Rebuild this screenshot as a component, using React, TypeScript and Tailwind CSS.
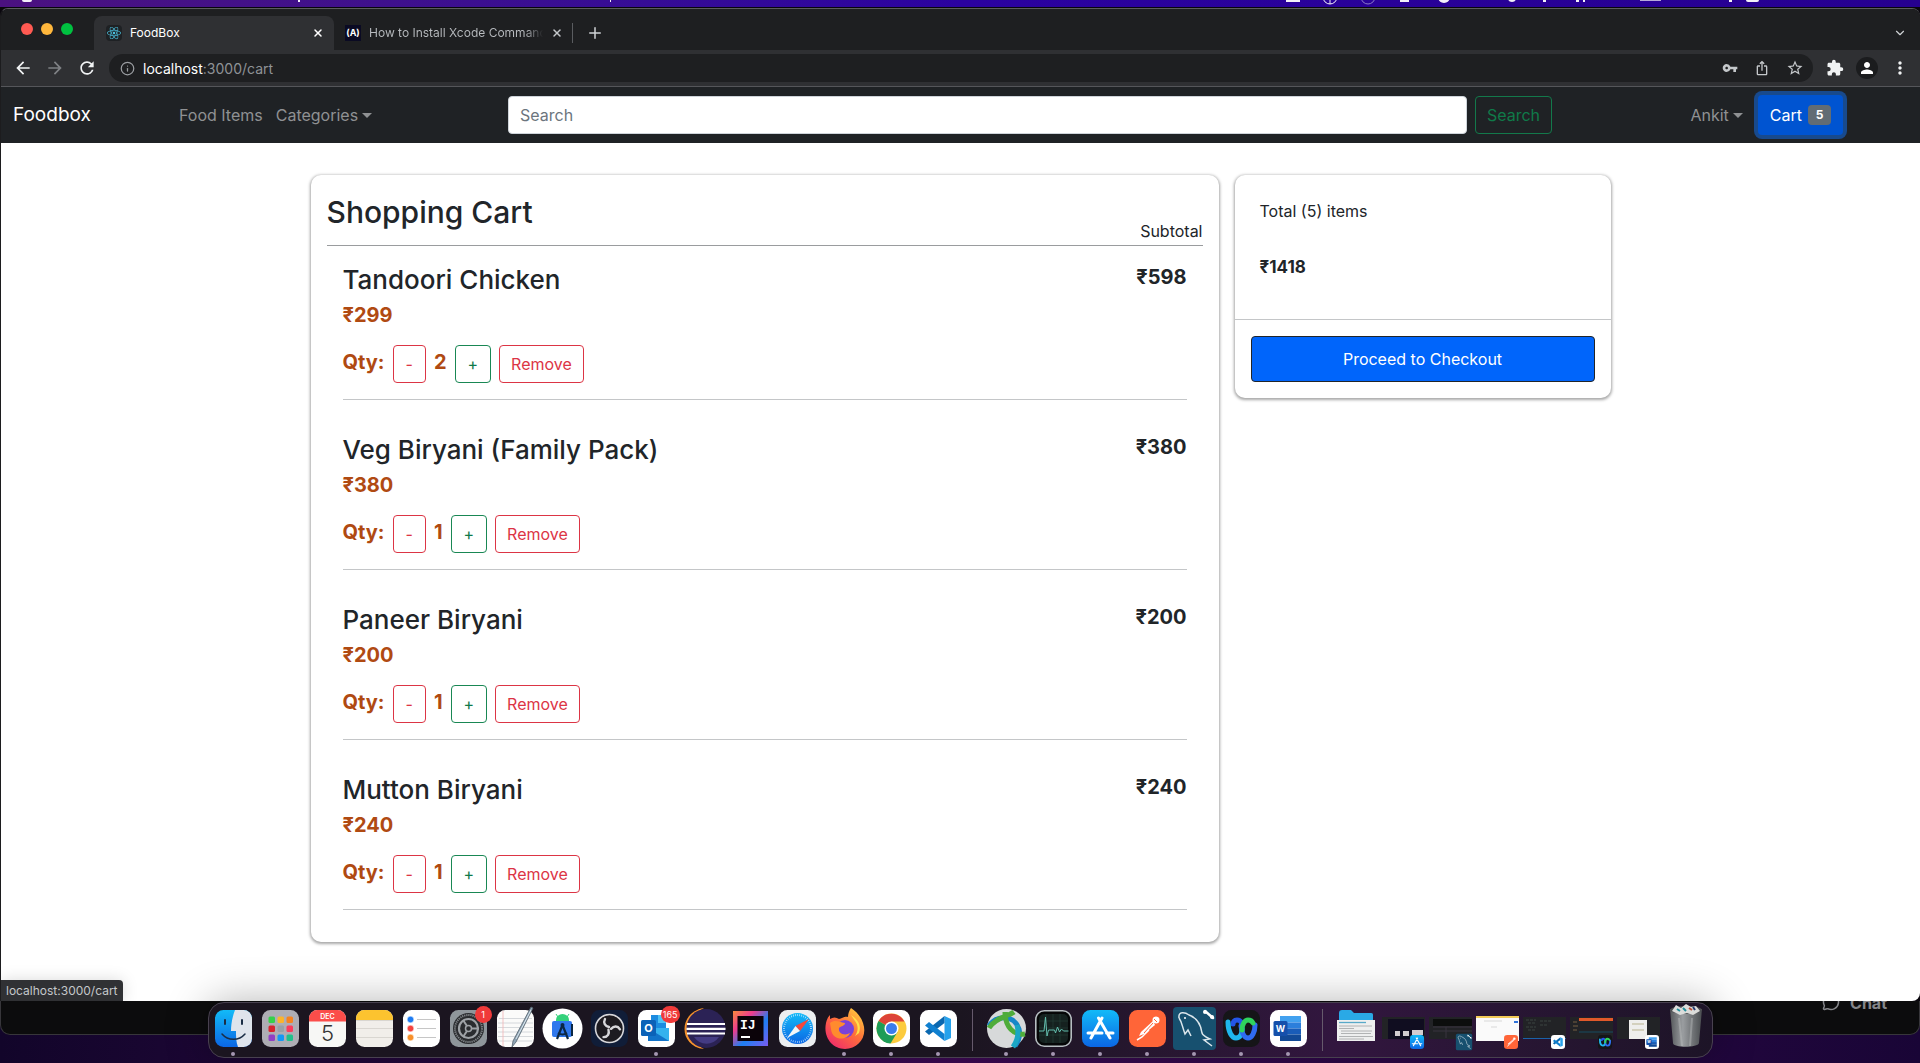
import React from "react";
import type { ReactNode } from "react";
import { FaReact } from "react-icons/fa";
import { MdVpnKey, MdExtension, MdPerson, MdMoreVert, MdStarBorder, MdIosShare, MdArrowBack, MdArrowForward, MdRefresh } from "react-icons/md";
import { ChevronDown, Info, Plus, X, MessageCircle } from "lucide-react";

type Item = { name: string; price: number; qty: number };

const items: Item[] = [
  { name: "Tandoori Chicken", price: 299, qty: 2 },
  { name: "Veg Biryani (Family Pack)", price: 380, qty: 1 },
  { name: "Paneer Biryani", price: 200, qty: 1 },
  { name: "Mutton Biryani", price: 240, qty: 1 },
];

const count = items.reduce((n, i) => n + i.qty, 0);
const total = items.reduce((n, i) => n + i.qty * i.price, 0);

function MenuBar() {
  return (
    <div className="h-[7px] shrink-0 overflow-hidden bg-gradient-to-r from-[#4b1180] via-[#2b02a0] to-[#260090]">
      <svg className="h-[7px] w-full" fill="#f3f0fa" aria-hidden="true">
        <rect x="22" y="-4" width="10" height="6" rx="2" />
        <rect x="298" y="0" width="2" height="2" />
        <rect x="610" y="0" width="1" height="2" />
        <rect x="1286" y="-3" width="14" height="5" />
        <circle cx="1330" cy="-3" r="7" fill="none" stroke="#f3f0fa" />
        <path d="M1330 -3v7" stroke="#f3f0fa" />
        <circle cx="1368" cy="-3" r="7" fill="none" stroke="#8a78c8" />
        <rect x="1400" y="-2" width="9" height="4" />
        <circle cx="1444" cy="-3" r="6" />
        <circle cx="1512" cy="-2" r="4" />
        <rect x="1543" y="0" width="3" height="2" />
        <rect x="1576" y="0" width="3" height="2" />
        <rect x="1583" y="0" width="2" height="2" />
        <rect x="1640" y="0" width="21" height="1" opacity=".7" />
        <rect x="1729" y="0" width="3" height="2" />
        <rect x="1746" y="-4" width="13" height="6" rx="2" />
      </svg>
    </div>
  );
}

function TabStrip() {
  return (
    <div className="flex h-[41px] shrink-0 items-end bg-[#1e1f21] pr-3">
      <div className="mb-[15px] ml-5 flex w-[73px] gap-2">
        <span className="size-3 rounded-full bg-[#ff5a52]" />
        <span className="size-3 rounded-full bg-[#ffb73c]" />
        <span className="size-3 rounded-full bg-[#00c140]" />
      </div>
      <div className="flex h-[34px] w-[240px] items-center rounded-t-lg bg-[#2f3033] pr-[10px] pl-3">
        <span className="grid size-4 place-items-center rounded-sm bg-[#1e2124]">
          <FaReact className="size-[14px] text-[#4bbfdc]" />
        </span>
        <span className="ml-2 flex-1 text-xs text-white">FoodBox</span>
        <button aria-label="Close FoodBox tab" className="text-white"><X size={12} strokeWidth={3} /></button>
      </div>
      <div className="flex h-[34px] w-[238px] items-center pr-[9px] pl-[11px]">
        <span className="grid h-4 w-4 shrink-0 place-items-center overflow-hidden bg-[#0a0a23] text-[9px] font-bold text-white">(A)</span>
        <span className="ml-2 flex-1 overflow-hidden bg-gradient-to-r from-[#b9bcc0] from-90% to-transparent bg-clip-text text-xs whitespace-nowrap text-transparent">How to Install Xcode Command</span>
        <button aria-label="Close Xcode tab" className="ml-2 text-[#c4c7ca]"><X size={12} strokeWidth={3} /></button>
      </div>
      <span className="mb-[7px] h-5 w-px bg-[#5a5c60]" />
      <button aria-label="New tab" className="mb-2 ml-[13px] text-[#d0d3d6]"><Plus size={18} /></button>
      <button aria-label="Search tabs" className="mb-[10px] ml-auto pr-px text-[#d0d3d6]"><ChevronDown size={14} /></button>
    </div>
  );
}

function Toolbar() {
  return (
    <div className="flex h-[37px] shrink-0 items-center border-b border-[#55565a] bg-[#2f3033] pr-[10px] pl-3 text-[#f1f3f4]">
      <button aria-label="Back" className="mr-3"><MdArrowBack size={20} /></button>
      <button aria-label="Forward" className="mr-3 text-[#7e8084]"><MdArrowForward size={20} /></button>
      <button aria-label="Reload" className="mr-3"><MdRefresh size={20} /></button>
      <div className="flex h-7 flex-1 items-center rounded-full bg-[#1e1f21] pr-[9px] pl-[11px] text-[#c4c7ca]">
        <Info size={15} className="text-[#9a9da1]" />
        <div className="ml-2 flex-1 text-[14px] text-[#8f9296]"><span className="text-white">localhost</span>:3000/cart</div>
        <button aria-label="Passwords"><MdVpnKey size={16} /></button>
        <button aria-label="Share" className="ml-4"><MdIosShare size={16} /></button>
        <button aria-label="Bookmark" className="ml-4"><MdStarBorder size={18} /></button>
      </div>
      <button aria-label="Extensions" className="ml-[13px]"><MdExtension size={18} /></button>
      <button aria-label="Profile" className="ml-3 grid size-[22px] place-items-center rounded-full bg-[#1b1c1e] text-white"><MdPerson size={18} /></button>
      <button aria-label="Browser menu" className="ml-3"><MdMoreVert size={20} /></button>
    </div>
  );
}

function Caret() {
  return <span className="ml-1 inline-block border-x-[5px] border-t-[5px] border-x-transparent border-t-current align-[3px]" />;
}

function NavBar() {
  return (
    <nav className="grid h-14 shrink-0 grid-cols-[507px_1fr_368px] items-center bg-[#1f2225] text-[16px] text-[#8f9193]">
      <div className="flex items-center">
        <a href="#home" className="ml-3 w-[166px] text-[19px] text-white">Foodbox</a>
        <a href="#food" className="mr-[13px]">Food Items</a>
        <button>Categories<Caret /></button>
      </div>
      <form className="flex gap-2">
        <input aria-label="Search" placeholder="Search" className="h-[38px] min-w-0 flex-1 rounded border border-[#ced4da] bg-white px-[11px] text-[#212529] placeholder:text-[#6c757d]" />
        <button type="button" className="h-[38px] rounded border border-[#13794b] px-[11px] text-[#0f7a49]">Search</button>
      </form>
      <div className="flex items-center justify-end pr-[77px]">
        <button className="mr-[15px]">Ankit<Caret /></button>
        <button className="flex h-10 items-center rounded bg-[#0054d1] px-3 text-white ring-4 ring-[#184a8d]">
          Cart<span className="ml-[6px] grid h-5 w-[23px] place-items-center rounded bg-[#626c74] text-xs font-bold">5</span>
        </button>
      </div>
    </nav>
  );
}

function CartRow({ item }: { item: Item }) {
  return (
    <li className="mb-8 flex items-start justify-between border-b border-[#c4c6c8] pb-4">
      <div>
        <h2 className="text-[26px] leading-9 font-medium">{item.name}</h2>
        <p className="mb-[13px] text-[20px] leading-[34px] font-bold text-[#b04a12]">₹{item.price}</p>
        <div className="flex gap-2 text-[20px] leading-[34px] font-bold text-[#b04a12]">
          <span>Qty:</span>
          <button aria-label={"Decrease " + item.name} className="h-[38px] rounded border border-[#dc3545] px-3 text-[16px] leading-9 font-normal text-[#dc3545]">-</button>
          <span>{item.qty}</span>
          <button aria-label={"Increase " + item.name} className="h-[38px] rounded border border-[#198754] px-3 text-[16px] leading-9 font-normal text-[#0f7a49]">+</button>
          <button className="h-[38px] rounded border border-[#dc3545] px-[11px] text-[16px] leading-9 font-normal text-[#dc3545]">Remove</button>
        </div>
      </div>
      <span className="text-[20px] leading-[30px] font-bold">₹{item.qty * item.price}</span>
    </li>
  );
}

function CartPage() {
  return (
    <main className="relative flex-1 rounded-br-lg bg-white text-[#212529]">
      <div className="mx-auto grid max-w-[1300px] grid-cols-[908fr_376fr] items-start gap-4 pt-8">
        <section className="rounded-[10px] px-4 shadow-[0_1px_3px_1px_rgba(0,0,0,0.35)]">
          <header className="flex h-[71px] items-end justify-between border-b border-[#9a9c9e]">
            <h1 className="pb-[13px] text-[30px] leading-10 font-medium">Shopping Cart</h1>
            <span className="pb-[2px] text-[16px] leading-6">Subtotal</span>
          </header>
          <ul className="px-4 pt-4">
            {items.map((i) => <CartRow key={i.name} item={i} />)}
          </ul>
        </section>
        <aside className="rounded-[10px] shadow-[0_1px_3px_1px_rgba(0,0,0,0.35)]">
          <div className="h-[145px] border-b border-[#c4c6c8] px-[25px] pt-6 text-[16px] leading-6">
            <p className="mb-8">Total ({count}) items</p>
            <p className="text-[17px] font-bold">₹{total}</p>
          </div>
          <div className="p-4">
            <button className="h-[46px] w-full rounded border border-[#212529] bg-[#0065fb] text-[16px] text-white">Proceed to Checkout</button>
          </div>
        </aside>
      </div>
      <div className="absolute bottom-0 left-0 h-[21px] rounded-tr bg-[#303134] px-[5px] text-xs leading-[21px] text-[#c4c7ca] shadow-[0_0_16px_rgba(0,0,0,0.15)]">localhost:3000/cart</div>
    </main>
  );
}

/* Dock artwork, drawn on a 37 unit square */

function Tile({ fill = "#fff" }: { fill?: string }) {
  return <rect width="37" height="37" rx="8.5" fill={fill} />;
}

const finder = (
  <>
    <clipPath id="fc"><rect width="37" height="37" rx="8.5" /></clipPath>
    <g clipPath="url(#fc)">
      <rect width="37" height="37" fill="url(#blue)" />
      <path d="M20 0C17 8 16 15 16 21h5c0 6 0 11 2 16h14V0z" fill="#dfe4ec" />
    </g>
    <path d="M10 10v4M27 10v4" stroke="#1b2d45" strokeWidth="2" strokeLinecap="round" />
    <path d="M7 24c6 7 17 7 23 0" fill="none" stroke="#1b2d45" strokeWidth="1.5" strokeLinecap="round" />
  </>
);

const padColors = ["#35d14a", "#fbb42c", "#f58220", "#d9232e", "#9aa0a6", "#fb3b5c", "#9140c4", "#1498f5", "#21c08b"];
const launchpad = (
  <>
    <Tile fill="#aeadb4" />
    {padColors.map((c, i) => <rect key={c} x={6.5 + (i % 3) * 9} y={6.5 + Math.floor(i / 3) * 9} width="6.5" height="6.5" rx="1.5" fill={c} />)}
  </>
);

const calendar = (
  <>
    <Tile fill="#f7f7f5" />
    <path d="M0 11.500V8.500A8.500 8.500 0 0 1 8.500 0h20A8.500 8.500 0 0 1 37 8.500v3z" fill="#fb4d4a" />
    <text x="18.500" y="9" fontSize="7" fontWeight="600" fill="#fff" textAnchor="middle">DEC</text>
    <text x="18.500" y="31" fontSize="22" fontWeight="300" fill="#333" textAnchor="middle">5</text>
  </>
);

const notes = (
  <>
    <Tile fill="#f1eeea" />
    <path d="M0 10V8.500A8.500 8.500 0 0 1 8.500 0h20A8.500 8.500 0 0 1 37 8.500V10z" fill="#fcc32f" />
    <path d="M0 10.500h37M0 18.500h37M0 27.500h37" stroke="#cfcbc5" strokeWidth=".7" />
  </>
);

const reminders = (
  <>
    <Tile />
    {["#1f7cf2", "#f4433f", "#f7902b"].map((c, i) => (
      <g key={c}>
        <circle cx="7.500" cy={9.5 + i * 9} r="2.700" fill={c} stroke={c} strokeOpacity=".4" strokeWidth="1.500" />
        <path d={"M14 " + (9.5 + i * 9) + "h19"} stroke="#c6c6c6" />
      </g>
    ))}
  </>
);

const settings = (
  <>
    <Tile fill="#8f969b" />
    <circle cx="18.500" cy="18.500" r="15.500" fill="#2a2c2f" />
    <circle cx="18.500" cy="18.500" r="13.500" fill="none" stroke="#84888c" strokeWidth="2" strokeDasharray="1.200 .9" />
    <circle cx="18.500" cy="18.500" r="9.500" fill="none" stroke="#9ea2a6" strokeWidth="2.200" />
    <circle cx="18.500" cy="18.500" r="3" fill="none" stroke="#9ea2a6" strokeWidth="1.500" />
    <path d="M21 18.500h8M17 21l-4 6M17 16l-4-6" stroke="#9ea2a6" strokeWidth="2" />
  </>
);

const textEdit = (
  <>
    <Tile fill="#fbfbfa" />
    <path d="M2 8.500h33M1 13h35M1 17.500h35M1 22h35M1 26.500h35M2 31h33" stroke="#cdd0d4" strokeWidth=".8" />
    <path d="M6 1v35" stroke="#f3b4b4" strokeWidth=".8" />
    <path d="M34-3 16 31l-1 6 4-5L36-2z" fill="#8fa5b5" stroke="#53616c" strokeWidth=".8" />
    <path d="M34 0 19 29" stroke="#dae6ee" />
  </>
);

const androidStudio = (
  <>
    <circle cx="18.500" cy="18.500" r="20" fill="#fff" />
    <path d="M12 10a6.500 6 0 0 1 13 0v2H12z" fill="#34d27b" />
    <path d="m14 7-2-3m11 3 2-3" stroke="#34d27b" />
    <rect x="8" y="11" width="20" height="16" rx="2" fill="#2f78ed" />
    <path d="m18.500 15-5.500 14m5.500-14L24 29" stroke="#0b2743" strokeWidth="2.200" />
    <circle cx="18.500" cy="15" r="2" fill="#0b2743" />
    <path d="M14 23c3 2 6 2 9 0M28 14v12" fill="none" stroke="#0b2743" strokeWidth="2" />
  </>
);

const obs = (
  <>
    <Tile fill="#101d38" />
    <circle cx="18.500" cy="18.500" r="14" fill="#1d1b20" stroke="#d7d7da" strokeWidth="1.600" />
    <g fill="none" stroke="#d7d7da" strokeWidth="2.400" strokeLinecap="round">
      <path d="M18 17c-4-1-6-4-4-8" />
      <path d="M18 17c-4-1-6-4-4-8" transform="rotate(120 18.500 18.500)" />
      <path d="M18 17c-4-1-6-4-4-8" transform="rotate(240 18.500 18.500)" />
    </g>
  </>
);

const outlook = (
  <>
    <Tile />
    <path d="M13 5h15v15H13z" fill="#1c8ce0" />
    <path d="M20 5h8v8h-8z" fill="#4fc3f5" />
    <path d="M10 18 31 18v13H10z" fill="#35b2ee" />
    <path d="m10 18 21 13H10z" fill="#1273c9" />
    <rect x="3" y="10" width="15" height="16" rx="1.500" fill="#0b62b8" />
    <text x="10.500" y="22" fontSize="11" fontWeight="700" fill="#fff" textAnchor="middle">O</text>
  </>
);

const eclipse = (
  <>
    <path d="M19-2C-7 2-7 36 19 39 5 32 5 5 19-2z" fill="#f7922d" />
    <circle cx="21" cy="18.500" r="19.500" fill="#2b2255" />
    <path d="M9 27a15 15 0 0 0 25 0z" fill="#443b83" />
    <path d="M2 14h38M1.500 18.800h39M2 23.500h38" stroke="#fff" strokeWidth="2.200" />
  </>
);

const intellij = (
  <>
    <rect x="1" y="1" width="35" height="35" fill="url(#ij)" />
    <rect x="5.500" y="6" width="26" height="25" fill="#0b0309" />
    <text x="8" y="19" fontSize="13" fontWeight="700" fill="#fff" fontFamily="Liberation Mono, monospace">IJ</text>
    <path d="M9 27h9" stroke="#fff" strokeWidth="2" />
  </>
);

const safari = (
  <>
    <Tile fill="#eceef0" />
    <circle cx="18.500" cy="18.500" r="15.500" fill="url(#blue)" />
    <circle cx="18.500" cy="18.500" r="13.500" fill="none" stroke="#d8efff" strokeWidth="2" strokeDasharray=".6 1.500" />
    <path d="m30 9-9 12-4.500-5z" fill="#f5483c" />
    <path d="m8 28 8.500-12L21 21z" fill="#f4f6f8" />
  </>
);

const firefox = (
  <>
    <path d="M25-2c6 4 10 9 12 15 5 14-5 26-18 26S-3 27 0 13c1-4 2-6 4-8v4c3-2 6-2 9 0 3 0 5-3 9-2 0-3 1-6 3-9z" fill="url(#fx)" />
    <path d="M29 11c4 5 3 11 0 15l4-3c2-6 1-12-8-18z" fill="#ffe04a" />
    <circle cx="19" cy="19" r="9" fill="#7a42d8" />
    <path d="M4 13c5-4 9-1 15 0 0 3-4 3-6 5-1 6 6 8 11 5-3 8-18 8-19-4z" fill="#ff8b2e" />
  </>
);

const chrome = (
  <>
    <Tile />
    <circle cx="18.500" cy="18.500" r="15" fill="#fccb3e" />
    <path d="M18.500 18.500 5.500 11A15 15 0 0 1 31.500 11.500H18.500z" fill="#dd4438" />
    <path d="M5.500 11a15 15 0 0 0 12 22.500l7-11.500-6-3.500z" fill="#1e9c58" />
    <circle cx="18.500" cy="18.500" r="7" fill="#fff" />
    <circle cx="18.500" cy="18.500" r="5.500" fill="#3b7ded" />
  </>
);

const vscode = (
  <>
    <Tile />
    <path d="m24.500 6 6.500 3v19l-6.500 3z" fill="#26a2ec" />
    <path d="M24.500 6v7L9 25l-4-3.500z" fill="#0a68b0" />
    <path d="M24.500 31v-7L9 12l-4 3.500z" fill="#1080d0" />
  </>
);

const globe = (
  <>
    <circle cx="18.500" cy="18.500" r="19.500" fill="#d7d9da" />
    <g fill="none" strokeWidth="5">
      <path d="M1 16C8 5 26 4 31 19c2 8-1 13-4 17" stroke="#1787c8" />
      <path d="M1 18C8 7 21 6 26 2M17 2c0 15 9 24 20 22" stroke="#4fac3a" />
      <path d="M29 15c2 8 1 15-4 22" stroke="#1aa6c4" />
    </g>
  </>
);

const activity = (
  <>
    <rect x=".8" y=".8" width="35.400" height="35.400" rx="8.500" fill="#050607" stroke="#b6bdc1" strokeWidth="1.600" />
    <rect x="4" y="4" width="29" height="29" rx="5" fill="#15211f" />
    <path d="M4 11h29M4 18h29M4 25h29M11 4v29M18 4v29M25 4v29" stroke="#26403b" strokeWidth=".6" />
    <path d="M4 21h5l1.500-14 1.500 19 1.500-6h6l1 3 2-6 2 5 2-3 2 2h5" fill="none" stroke="#63bfae" />
  </>
);

const appStore = (
  <>
    <Tile fill="url(#blue)" />
    <path d="m20 8-11 20M16.500 8 28 28M6 23h14M24.500 23H31" stroke="#fff" strokeWidth="3" strokeLinecap="round" />
  </>
);

const postman = (
  <>
    <Tile fill="#ff6538" />
    <circle cx="27" cy="10" r="3.500" fill="#fff" />
    <path d="M24 11 12 22l-2 4 5-2 11-9z" fill="#fff" />
    <path d="m20 20-7 7-5 3" stroke="#fff" strokeWidth="1.500" fill="none" />
    <path d="m25 9 3 3M15 23l9-10" stroke="#ff6538" />
  </>
);

const mysql = (
  <>
    <rect x="-3" y="-3" width="43" height="43" rx="4" fill="#17506f" />
    <path d="M3 8C2 1 9 2 13 5c8 3 12 10 13 18 1 3 4 4 8 6l-6 1 8 6" fill="none" stroke="#dbe6ec" strokeWidth="1.500" />
    <path d="M3 8c3 4 3 8 6 16l3-4 3 6" fill="none" stroke="#dbe6ec" strokeWidth="1.500" />
    <circle cx="9" cy="8" r="1" fill="#fff" />
    <path d="m29 1 8 7" stroke="#fff" strokeWidth="2.500" strokeLinecap="round" />
    <circle cx="29" cy="2" r="2" fill="#fff" /><circle cx="36" cy="7" r="2" fill="#fff" />
  </>
);

const webex = (
  <>
    <Tile fill="#151518" />
    <g fill="none" strokeWidth="5" strokeLinecap="round">
      <path d="M19 20c1-6-1-10-5-10-3 0-4 2-4 4" stroke="#2456e8" />
      <path d="M5 12c0 10 4 16 8 16s6-4 6-9" stroke="#1fb7ed" />
      <path d="M18 16c1 7 3 12 7 12s7-6 7-13" stroke="#2f6cf0" />
      <path d="M19 20c0-6 3-10 6-10 2 0 4 1 5 3" stroke="#2fd45d" />
    </g>
  </>
);

const word = (
  <>
    <Tile />
    <path d="M10 6h21v6.500H10z" fill="#42a1ef" />
    <path d="M10 12.500h21v6H10z" fill="#2c7fdc" />
    <path d="M10 18.500h21v6H10z" fill="#195cb8" />
    <path d="M10 24.500h21V31H10z" fill="#124a97" />
    <rect x="3.500" y="11" width="14" height="15" rx="1.500" fill="#1550ab" />
    <text x="10.500" y="22" fontSize="9" fontWeight="700" fill="#fff" textAnchor="middle">W</text>
  </>
);

const folder = (
  <>
    <path d="M1 3c0-2 1-3 3-3h9l3 3h17c2 0 2 1 2 3v9H1z" fill="#2aa9e6" />
    <path d="M-1 10h38v21H-1z" fill="#eeefef" />
    <path d="M1 12.500h27" stroke="#58a9c8" strokeWidth="1.300" />
    <path d="M1 16h33M1 18.500h15M3 21h31M3 23.500h30M1 26.500h34M1 29h25" stroke="#a9abad" strokeWidth=".9" />
  </>
);

const trash = (
  <>
    <path d="m3-1 3 34c0 5 25 5 26 0l3-34z" fill="url(#can)" />
    <ellipse cx="19" cy="0" rx="16" ry="4" fill="#4c4e52" />
    <path d="m5 1 4-6 5 3 5-4 5 3 5-1 4 5-7 4-6-2-7 2z" fill="#dcdcda" />
    <path d="m10-1 3 2m3-3 3 3" stroke="#248f9c" strokeWidth="2" /><path d="m22-2 3 2" stroke="#bd4e35" strokeWidth="2" /><path d="m26-3 2 3" stroke="#243a70" strokeWidth="2" />
    <path d="m12 8 3 28M25 8l-2 28" stroke="#c0c3c4" strokeOpacity=".4" strokeWidth="2" />
  </>
);

function thumb(kind: "store" | "sql" | "sheet" | "code" | "call" | "doc", badge: ReactNode) {
  return (
    <>
      <rect x="-3" y={kind === "sheet" ? 6 : 7} width="43" height={kind === "sheet" ? 25 : 22} fill={kind === "sheet" ? "#fafafa" : "#222326"} />
      {kind === "store" && <><path d="M3 9h36v20H3z" fill="#100d20" /><path d="M10 21h5v5h-5zM18 21h6v5h-6zM27 20h11v5H27z" fill="#d3cdd0" /></>}
      {kind === "sql" && <><path d="M1 9h39v7H1z" fill="#0c0e0d" /><path d="M1 17h39M1 21h39M14 17v11" stroke="#39343f" /></>}
      {kind === "sheet" && <><path d="M-3 7h43" stroke="#f2cb57" strokeWidth="2" /><path d="M35 11h4v2h-4z" fill="#2e72da" /><path d="M5 11h18M12 17h6" stroke="#d8d8d8" /></>}
      {kind === "code" && <><path d="M0 10h10M2 13h7M0 17h10M2 20h7M14 11h12M14 15h8" stroke="#3a4440" strokeDasharray="3 1" /><path d="M-3 28.500h43" stroke="#1a62a8" /></>}
      {kind === "call" && <><path d="M6 8h34v3H6z" fill="#e1592a" /><path d="M0 12h4M0 16h5M0 20h4" stroke="#746042" /><path d="M6 22h34" stroke="#174c60" /></>}
      {kind === "doc" && <><path d="M9 10h18v19H9z" fill="#eeeeec" /><path d="M12 14h12M12 20h12" stroke="#b9b38f" /></>}
      <g transform="translate(25 25) scale(.38)">{badge}</g>
    </>
  );
}

type App = { name: string; art: ReactNode; running?: boolean; badge?: string };

const groups: App[][] = [
  [
    { name: "Finder", art: finder, running: true },
    { name: "Launchpad", art: launchpad },
    { name: "Calendar", art: calendar },
    { name: "Notes", art: notes },
    { name: "Reminders", art: reminders },
    { name: "System Preferences", art: settings, badge: "1" },
    { name: "TextEdit", art: textEdit },
    { name: "Android Studio", art: androidStudio },
    { name: "OBS", art: obs },
    { name: "Outlook", art: outlook, running: true, badge: "165" },
    { name: "Eclipse", art: eclipse },
    { name: "IntelliJ IDEA", art: intellij },
    { name: "Safari", art: safari },
    { name: "Firefox", art: firefox, running: true },
    { name: "Chrome", art: chrome, running: true },
    { name: "Visual Studio Code", art: vscode, running: true },
  ],
  [
    { name: "AnyConnect", art: globe, running: true },
    { name: "Activity Monitor", art: activity, running: true },
    { name: "App Store", art: appStore, running: true },
    { name: "Postman", art: postman, running: true },
    { name: "MySQL Workbench", art: mysql, running: true },
    { name: "Webex", art: webex, running: true },
    { name: "Word", art: word, running: true },
  ],
  [
    { name: "Documents", art: folder },
    { name: "App Store window", art: thumb("store", appStore) },
    { name: "MySQL window", art: thumb("sql", mysql) },
    { name: "Postman window", art: thumb("sheet", postman) },
    { name: "Code window", art: thumb("code", vscode) },
    { name: "Webex window", art: thumb("call", webex) },
    { name: "Word window", art: thumb("doc", word) },
    { name: "Trash", art: trash },
  ],
];

function DockIcon({ app }: { app: App }) {
  return (
    <button aria-label={app.name} className="relative flex w-[47px] shrink-0 flex-col items-center pt-[7px]">
      <svg viewBox="0 0 37 37" className="size-[37px] overflow-visible" aria-hidden="true">{app.art}</svg>
      {app.running && <span className="mt-[5px] size-1 rounded-full bg-[#a597b1]" />}
      {app.badge && <span className="absolute top-[3px] right-0 grid h-[17px] min-w-[17px] place-items-center rounded-full bg-[#f03a3a] px-[2px] text-[9px] leading-none text-white">{app.badge}</span>}
    </button>
  );
}

function Dock() {
  return (
    <footer className="relative h-[62px] shrink-0 bg-gradient-to-r from-[#12052a] via-[#3e0a56] to-[#190536] pt-px">
      <div className="absolute inset-x-0 top-0 flex h-[34px] justify-end overflow-hidden rounded-b-[10px] border border-t-0 border-[#37363a] bg-[#0c0c0d] pr-8 text-[16px] font-bold text-[#85868a]">
        <div className="-mt-[10px] flex gap-[10px] leading-6"><MessageCircle size={18} strokeWidth={2} className="mt-[2px]" />Chat</div>
      </div>
      <svg className="absolute size-0" aria-hidden="true">
        <defs>
          <linearGradient id="blue" x2="0" y2="1"><stop stopColor="#12baf8" /><stop offset="1" stopColor="#0b66e4" /></linearGradient>
          <linearGradient id="ij" x2="1" y2="1"><stop stopColor="#f98a3c" /><stop offset=".3" stopColor="#ee3d8f" /><stop offset=".6" stopColor="#1d7ff2" /><stop offset="1" stopColor="#7b5cf0" /></linearGradient>
          <linearGradient id="fx" x1="1" x2=".2" y2="1"><stop stopColor="#ffdf3f" /><stop offset=".5" stopColor="#ff7139" /><stop offset="1" stopColor="#ef2a6d" /></linearGradient>
          <linearGradient id="can" x2="1"><stop stopColor="#55585b" /><stop offset=".4" stopColor="#9a9da0" /><stop offset="1" stopColor="#4a4d50" /></linearGradient>
        </defs>
      </svg>
      <div className="relative mx-auto flex h-14 w-fit rounded-2xl border border-[#48414f] bg-gradient-to-r from-[#1b1520] from-50% via-[#32163f] via-75% to-[#1d1427] pr-[3px] pl-px shadow-[0_0_44px_rgba(0,0,0,0.3)]">
        {groups.map((g, n) => (
          <div key={n} className="flex">
            {n > 0 && <span className="mx-[10px] mt-[6px] h-[42px] w-px bg-[#665a6c]" />}
            {g.map((a) => <DockIcon key={a.name} app={a} />)}
          </div>
        ))}
      </div>
    </footer>
  );
}

export default function App() {
  return (
    <div className="flex min-h-screen flex-col overflow-hidden bg-[#09060d] font-['Inter','Liberation_Sans',sans-serif]">
      <MenuBar />
      <div className="mt-px flex flex-1 flex-col overflow-hidden rounded-t-lg border-t border-l border-t-[#5a5b5e] border-l-[#1c1c1e]">
        <TabStrip />
        <Toolbar />
        <NavBar />
        <CartPage />
      </div>
      <Dock />
    </div>
  );
}
